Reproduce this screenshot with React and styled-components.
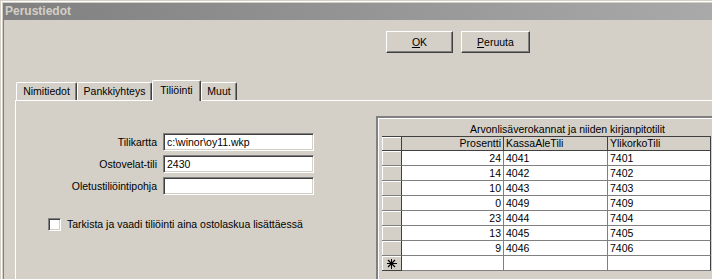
import React from "react";
import styled, { createGlobalStyle } from "styled-components";

const FACE = "#d4d0c8";

const GlobalStyle = createGlobalStyle`
  html, body { margin: 0; padding: 0; background: ${FACE}; overflow: hidden; }
  body { font-family: "Liberation Sans", Arial, sans-serif; font-size: 10.5px; color: #000; }
  * { box-sizing: border-box; }
`;

const Window = styled.div`
  width: 712px;
  height: 279px;
  background: ${FACE};
  padding: 3px 0 0 3px;
  box-shadow: inset 1px 1px 0 ${FACE}, inset 2px 2px 0 #fff;
  display: flex;
  flex-direction: column;
  overflow: hidden;
`;

const TitleBar = styled.div`
  height: 17px;
  flex: none;
  background: linear-gradient(to right, #808080, #a9a9a9);
  color: ${FACE};
  font-weight: bold;
  font-size: 12px;
  line-height: 17px;
  padding-left: 2px;
  white-space: nowrap;
`;

const Client = styled.div`
  flex: 1;
  display: flex;
  flex-direction: column;
  border-left: 1px solid #808080;
  min-height: 0;
`;

const ButtonRow = styled.div`
  display: flex;
  gap: 8px;
  padding: 11px 0 0 382px;
  flex: none;
`;

const Button = styled.button`
  width: ${(p) => p.$w}px;
  height: 22px;
  padding: 0;
  margin: 0;
  background: ${FACE};
  font-family: inherit;
  font-size: 10.5px;
  color: #000;
  border: 1px solid;
  border-color: #fff #404040 #404040 #fff;
  box-shadow: inset -1px -1px 0 #808080, inset 1px 1px 0 ${FACE};
  cursor: default;
  u { text-decoration: underline; }
`;

const TabStrip = styled.div`
  display: flex;
  align-items: flex-end;
  margin-top: 27px;
  padding-left: 12px;
  height: 20px;
  flex: none;
  position: relative;
  z-index: 1;
`;

const Tab = styled.div`
  width: ${(p) => p.$w}px;
  height: ${(p) => (p.$active ? 21 : 18)}px;
  margin-bottom: ${(p) => (p.$active ? -1 : 0)}px;
  background: ${FACE};
  border-top: 1px solid #fff;
  border-left: 1px solid #fff;
  border-right: 1px solid #404040;
  box-shadow: inset -1px 0 0 #808080;
  border-radius: 2px 2px 0 0;
  text-align: center;
  line-height: 16px;
  padding-top: ${(p) => (p.$active ? 1 : 0)}px;
  white-space: nowrap;
`;

const Panel = styled.div`
  flex: 1;
  margin-left: 11px;
  border-top: 1px solid #fff;
  border-left: 1px solid #fff;
  display: flex;
  min-height: 0;
`;

const FormSection = styled.div`
  width: 360px;
  flex: none;
  padding-top: 32px;
  display: flex;
  flex-direction: column;
`;

const FieldGrid = styled.div`
  display: grid;
  grid-template-columns: 141px 151px;
  column-gap: 6px;
  row-gap: 4px;
`;

const Label = styled.div`
  text-align: right;
  line-height: 18px;
  white-space: nowrap;
`;

const TextBox = styled.div`
  height: 18px;
  background: #fff;
  border: 1px solid;
  border-color: #808080 #fff #fff #808080;
  box-shadow: inset 1px 1px 0 #404040, inset -1px -1px 0 ${FACE};
  padding: 0 3px;
  line-height: 16px;
  white-space: nowrap;
  overflow: hidden;
`;

const CheckRow = styled.div`
  display: flex;
  align-items: center;
  gap: 6px;
  margin-top: 23px;
  padding-left: 32px;
`;

const CheckBox = styled.div`
  width: 13px;
  height: 13px;
  flex: none;
  background: #fff;
  border: 1px solid;
  border-color: #808080 #fff #fff #808080;
  box-shadow: inset 1px 1px 0 #404040, inset -1px -1px 0 ${FACE};
`;

const CheckLabel = styled.span`
  line-height: 13px;
  white-space: nowrap;
`;

const GridSection = styled.div`
  flex: 1;
  padding-top: 15px;
  min-width: 0;
`;

const GridFrame = styled.div`
  height: 100%;
  border-top: 2px solid #808080;
  border-left: 2px solid #808080;
  box-shadow: inset 1px 1px 0 #fff;
  padding: 4px 0 0 4px;
`;

const Sheet = styled.div`
  display: grid;
  grid-template-columns: 20px 102px 104px 103px;
  width: 329px;
`;

const Caption = styled.div`
  grid-column: 1 / -1;
  height: 15px;
  line-height: 15px;
  padding-left: 88px;
  white-space: nowrap;
  border-bottom: 1px solid #404040;
`;

const Corner = styled.div`
  height: 14px;
  border-right: 1px solid #404040;
  border-bottom: 1px solid #404040;
  box-shadow: inset 1px 1px 0 #fff;
`;

const HeadCell = styled.div`
  height: 14px;
  line-height: 13px;
  padding: 0 2px;
  text-align: ${(p) => p.$align || "left"};
  border-right: 1px solid #404040;
  border-bottom: 1px solid #404040;
  white-space: nowrap;
  overflow: hidden;
`;

const Selector = styled.div`
  height: 15px;
  border-right: 1px solid #404040;
  border-bottom: 1px solid ${(p) => (p.$last ? "#404040" : "#808080")};
  box-shadow: inset 1px 1px 0 #fff;
  display: flex;
  align-items: center;
  justify-content: center;
`;

const Cell = styled.div`
  height: 15px;
  line-height: 14px;
  background: #fff;
  padding: 0 2px;
  text-align: ${(p) => p.$align || "left"};
  border-right: 1px solid ${(p) => (p.$edge ? "#404040" : "#808080")};
  border-bottom: 1px solid #808080;
  white-space: nowrap;
`;

const rows = [
  [24, "4041", "7401"],
  [14, "4042", "7402"],
  [10, "4043", "7403"],
  [0, "4049", "7409"],
  [23, "4044", "7404"],
  [13, "4045", "7405"],
  [9, "4046", "7406"],
];

const NewRowMark = () => (
  <svg width="11" height="11" viewBox="0 0 11 11">
    <g stroke="#000" strokeWidth="1" shapeRendering="crispEdges">
      <line x1="5.5" y1="0.5" x2="5.5" y2="10.5" />
      <line x1="0.5" y1="5.5" x2="10.5" y2="5.5" />
    </g>
    <g stroke="#000" strokeWidth="1.2">
      <line x1="2" y1="2" x2="9" y2="9" />
      <line x1="9" y1="2" x2="2" y2="9" />
    </g>
  </svg>
);

export default function App() {
  return (
    <>
      <GlobalStyle />
      <Window>
        <TitleBar>Perustiedot</TitleBar>
        <Client>
          <ButtonRow>
            <Button $w={67}><u>O</u>K</Button>
            <Button $w={69}><u>P</u>eruuta</Button>
          </ButtonRow>
          <TabStrip>
            <Tab $w={61}>Nimitiedot</Tab>
            <Tab $w={75}>Pankkiyhteys</Tab>
            <Tab $w={49} $active>Tiliöinti</Tab>
            <Tab $w={36}>Muut</Tab>
          </TabStrip>
          <Panel>
            <FormSection>
              <FieldGrid>
                <Label>Tilikartta</Label>
                <TextBox>c:\winor\oy11.wkp</TextBox>
                <Label>Ostovelat-tili</Label>
                <TextBox>2430</TextBox>
                <Label>Oletustiliöintipohja</Label>
                <TextBox />
              </FieldGrid>
              <CheckRow>
                <CheckBox />
                <CheckLabel>Tarkista ja vaadi tiliöinti aina ostolaskua lisättäessä</CheckLabel>
              </CheckRow>
            </FormSection>
            <GridSection>
              <GridFrame>
                <Sheet>
                  <Caption>Arvonlisäverokannat ja niiden kirjanpitotilit</Caption>
                  <Corner />
                  <HeadCell $align="right">Prosentti</HeadCell>
                  <HeadCell>KassaAleTili</HeadCell>
                  <HeadCell>YlikorkoTili</HeadCell>
                  {rows.map(([p, k, y]) => (
                    <React.Fragment key={k}>
                      <Selector />
                      <Cell $align="right">{p}</Cell>
                      <Cell>{k}</Cell>
                      <Cell $edge>{y}</Cell>
                    </React.Fragment>
                  ))}
                  <Selector $last><NewRowMark /></Selector>
                  <Cell />
                  <Cell />
                  <Cell $edge />
                </Sheet>
              </GridFrame>
            </GridSection>
          </Panel>
        </Client>
      </Window>
    </>
  );
}
